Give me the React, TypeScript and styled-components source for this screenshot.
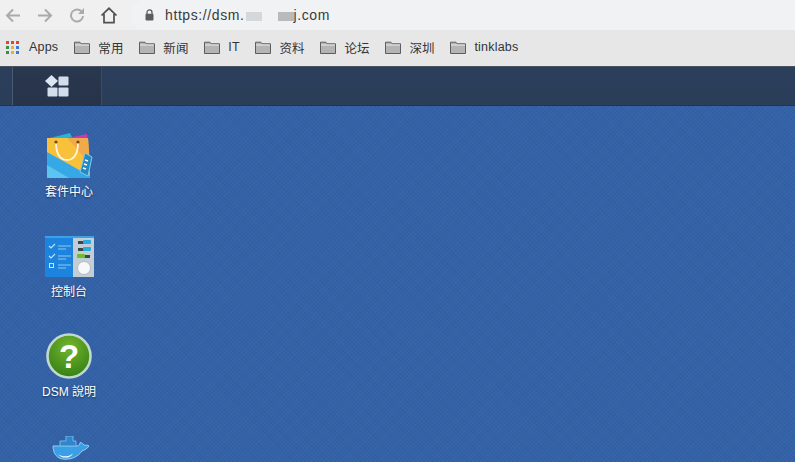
import React from 'react';
import styled, { createGlobalStyle } from 'styled-components';

const GlobalStyle = createGlobalStyle`
  html, body {
    margin: 0;
    padding: 0;
    height: 100%;
    overflow: hidden;
    background: #3462a6;
    font-family: "Liberation Sans", "Noto Sans CJK SC", sans-serif;
  }
`;

const Page = styled.div`
  width: 795px;
  height: 462px;
  display: flex;
  flex-direction: column;
  overflow: hidden;
`;

const AddressRow = styled.div`
  height: 30px;
  flex: none;
  background: #f0f0f1;
  display: flex;
  align-items: center;
  gap: 6px;
`;

const NavButton = styled.div`
  width: 26px;
  height: 30px;
  display: flex;
  align-items: center;
  justify-content: center;
  flex: none;
`;

const UrlBar = styled.div`
  flex: 1;
  height: 30px;
  margin-left: 3px;
  background: #f1f2f4;
  border-radius: 15px 0 0 15px;
  display: flex;
  align-items: center;
  padding-left: 14px;
  font-size: 14px;
  letter-spacing: 0.6px;
  color: #3a3b3d;
`;

const UrlText = styled.span`
  margin-left: 11px;
  white-space: nowrap;
`;

const Redaction = styled.span<{ $w: number; $gap: number; $shade: string }>`
  display: inline-block;
  width: ${p => p.$w}px;
  height: 9px;
  margin-left: ${p => p.$gap}px;
  background: ${p => p.$shade};
  vertical-align: -1px;
`;

const BookmarkRow = styled.div`
  height: 36px;
  flex: none;
  background: #e7e7e7;
  display: flex;
  align-items: center;
  padding: 0 0 2px 6px;
  box-sizing: border-box;
  font-size: 12.5px;
  letter-spacing: 0.2px;
  color: #333436;
`;

const AppsItem = styled.div`
  display: flex;
  align-items: center;
  gap: 10px;
  margin-right: 16px;
`;

const Bookmark = styled.div`
  display: flex;
  align-items: center;
  gap: 8px;
  margin-right: 15.6px;
  white-space: nowrap;
`;

const Taskbar = styled.div`
  height: 40px;
  flex: none;
  box-sizing: border-box;
  background: linear-gradient(#2b3f5c, #2a3e5a);
  border-top: 1px solid #4a5260;
  border-bottom: 1px solid #24344c;
  display: flex;
  padding-left: 12px;
`;

const MainMenu = styled.div`
  width: 90px;
  box-sizing: border-box;
  background: linear-gradient(#2a384f, #263349);
  border-left: 1px solid #4a5a72;
  border-right: 1px solid #3c4c64;
  display: flex;
  align-items: center;
  justify-content: center;
`;

const Desktop = styled.div`
  flex: 1;
  min-height: 0;
  overflow: hidden;
  background-color: #3462a6;
  background-image:
    repeating-linear-gradient(45deg, rgba(20, 50, 110, 0.07) 0 1px, transparent 1px 3px),
    repeating-linear-gradient(-45deg, rgba(120, 160, 220, 0.05) 0 1px, transparent 1px 3px);
  display: flex;
  flex-direction: column;
  align-items: flex-start;
  padding: 24px 0 0 29px;
`;

const DesktopItem = styled.div`
  width: 80px;
  height: 100px;
  flex: none;
  display: flex;
  flex-direction: column;
  align-items: center;
`;

const IconSlot = styled.div`
  height: 52px;
  flex: none;
  display: flex;
  align-items: center;
  justify-content: center;
`;

const ItemLabel = styled.div`
  margin-top: 2px;
  font-size: 12px;
  line-height: 16px;
  color: #ffffff;
  white-space: nowrap;
  text-shadow: 0 1px 2px rgba(0, 0, 0, 0.55);
`;

const BackIcon = ({ flip }: { flip?: boolean }) => (
  <svg width="16" height="15" viewBox="0 0 16 15" style={flip ? { transform: 'scaleX(-1)' } : undefined}>
    <path d="M8 1.5 2 7.5l6 6M2.5 7.5H15" fill="none" stroke="#a9aaac" strokeWidth="2" />
  </svg>
);

const ReloadIcon = () => (
  <svg width="16" height="16" viewBox="0 0 16 16">
    <path d="M13 5.2A6 6 0 1 0 14 9" fill="none" stroke="#a9aaac" strokeWidth="1.9" />
    <path d="M15 1v6H9z" fill="#a9aaac" />
  </svg>
);

const HomeIcon = () => (
  <svg width="18" height="17" viewBox="0 0 18 17">
    <path d="M1.5 8.5 9 1.3l7.5 7.2M4 7v8.7h10V7" fill="none" stroke="#4f5052" strokeWidth="1.7" />
  </svg>
);

const LockIcon = () => (
  <svg width="9" height="12" viewBox="0 0 9 12" style={{ flex: 'none' }}>
    <path d="M2 5V3.4a2.5 2.5 0 0 1 5 0V5" fill="none" stroke="#5c5d5f" strokeWidth="1.3" />
    <rect x="0.5" y="4.8" width="8" height="6.6" rx="1" fill="#5c5d5f" />
  </svg>
);

const appDots = ['#d9463a', '#d9463a', '#d9463a', '#3b8f4a', '#e8b32c', '#3f78d8', '#3b8f4a', '#e8b32c', '#3f78d8'];

const AppsIcon = () => (
  <svg width="13" height="13" viewBox="0 0 13 13">
    {appDots.map((fill, i) => (
      <rect key={i} x={(i % 3) * 5} y={Math.floor(i / 3) * 5} width="3" height="3" fill={fill} />
    ))}
  </svg>
);

const FolderIcon = () => (
  <svg width="16" height="13" viewBox="0 0 16 13">
    <path d="M.5 12.5V1.2h5.4l1.3 1.6h8.3v9.7z" fill="#b4b4b4" stroke="#5d5d5d" />
    <path d="M1 4h14" stroke="#ececec" strokeWidth="1" />
  </svg>
);

const MenuIcon = () => (
  <svg width="24" height="22" viewBox="0 0 24 22">
    <path d="M6.5 0 13 6 6.5 12 0 6z" fill="#dde5ef" />
    <rect x="13.5" y="1.5" width="10" height="9" rx="1" fill="#d3deec" />
    <rect x="2.5" y="12.5" width="10" height="9" rx="1" fill="#d3deec" />
    <rect x="13.5" y="12.5" width="10" height="9" rx="1" fill="#d3deec" />
  </svg>
);

const PackageIcon = () => (
  <svg width="48" height="48" viewBox="0 0 48 48">
    <path d="M5 6 25 1l4 8H5z" fill="#2bb3d6" />
    <path d="M13 8 42 2l1 10H13z" fill="#c63bb0" />
    <path d="M2 6h41l2 40H2z" fill="#f9c13a" />
    <path d="M22 6h21l2 26z" fill="#f2a94a" />
    <path d="M2 20l43 24v2H2z" fill="#37a8e6" />
    <path d="M2 33l22 13H2z" fill="#5cc4f0" />
    <path d="M11 11c0 12 5 17 11 17s11-5 11-17" fill="none" stroke="#fff6d8" strokeWidth="1.8" />
    <circle cx="11" cy="10" r="1.6" fill="#6b4a12" />
    <circle cx="33" cy="10" r="1.6" fill="#6b4a12" />
    <path d="M40 21l7 4-4 19-8-4z" fill="#2389c6" stroke="#7fcbee" />
    <path d="M40 28l3 1M39 32l3 1M38 36l3 1" stroke="#ffffff" strokeWidth="1.4" />
  </svg>
);

const ControlIcon = () => (
  <svg width="49" height="41" viewBox="0 0 49 41">
    <rect x="0" y="0" width="28" height="41" fill="#1c84de" />
    <rect x="28" y="0" width="21" height="41" fill="#c3cdd4" />
    <rect x="0" y="0" width="49" height="2" fill="#3fa0ea" />
    <path d="M4 10l2 2 4-4M4 20l2 2 4-4" fill="none" stroke="#bfe4fb" strokeWidth="1.1" />
    <rect x="4.5" y="27.5" width="4" height="4" fill="none" stroke="#bfe4fb" />
    <path d="M13 10h13M13 13h8M13 20h13M13 23h8M13 29h13M13 32h8" stroke="#8cc8f2" />
    <rect x="33" y="5" width="12" height="3" fill="#3a4650" />
    <rect x="38" y="4" width="8" height="4" rx="1" fill="#2aa8e0" />
    <rect x="33" y="12" width="12" height="3" fill="#3a4650" />
    <rect x="38" y="11" width="8" height="4" rx="1" fill="#2aa8e0" />
    <rect x="33" y="19" width="12" height="3" fill="#3a4650" />
    <rect x="32" y="18" width="8" height="4" rx="1" fill="#6cc02c" />
    <circle cx="39" cy="32" r="6.5" fill="#f6f8f9" stroke="#b4bec5" />
  </svg>
);

const HelpIcon = () => (
  <svg width="46" height="46" viewBox="0 0 46 46">
    <defs>
      <radialGradient id="helpFill" cx="50%" cy="30%" r="75%">
        <stop offset="0%" stopColor="#74b52c" />
        <stop offset="100%" stopColor="#2f7d14" />
      </radialGradient>
    </defs>
    <circle cx="23" cy="23" r="21.5" fill="url(#helpFill)" stroke="#c3d8cc" strokeWidth="2.6" />
    <text x="23" y="35" textAnchor="middle" fontSize="33" fontWeight="700" fontFamily="Liberation Sans, sans-serif" fill="#ffffff">?</text>
  </svg>
);

const DockerIcon = () => (
  <svg width="38" height="40" viewBox="0 0 38 40" style={{ transform: 'translateX(2px)' }}>
    <g transform="scale(1 0.83)">
      <path d="M1 12h24c2 0 3-2 3-4 2 0 3 1 4 3 2 0 4 0 5 1-2 4-5 5-7 6-4 7-10 10-17 10C5 28 1 21 1 12z" fill="#3a9fe4" stroke="#9ed2f2" />
      <path d="M8 6h6V0h7v6h3v6H8z" fill="#2f86cc" stroke="#79bce8" />
      <path d="M6 22c5 4 11 3 15-1-2 6-11 7-15 1z" fill="#ffffff" />
    </g>
  </svg>
);

const bookmarks = ['常用', '新闻', 'IT', '资料', '论坛', '深圳', 'tinklabs'];

const App: React.FC = () => {
  return (
    <Page>
      <GlobalStyle />
      <AddressRow>
        <NavButton><BackIcon /></NavButton>
        <NavButton><BackIcon flip /></NavButton>
        <NavButton><ReloadIcon /></NavButton>
        <NavButton><HomeIcon /></NavButton>
        <UrlBar>
          <LockIcon />
          <UrlText>
            https://dsm.
            <Redaction $w={16} $gap={1} $shade="#d6d7d9" />
            <Redaction $w={16} $gap={16} $shade="#b9babc" />
            j.com
          </UrlText>
        </UrlBar>
      </AddressRow>
      <BookmarkRow>
        <AppsItem><AppsIcon />Apps</AppsItem>
        {bookmarks.map(name => (
          <Bookmark key={name}><FolderIcon />{name}</Bookmark>
        ))}
      </BookmarkRow>
      <Taskbar>
        <MainMenu><MenuIcon /></MainMenu>
      </Taskbar>
      <Desktop>
        <DesktopItem>
          <IconSlot><PackageIcon /></IconSlot>
          <ItemLabel>套件中心</ItemLabel>
        </DesktopItem>
        <DesktopItem>
          <IconSlot><ControlIcon /></IconSlot>
          <ItemLabel>控制台</ItemLabel>
        </DesktopItem>
        <DesktopItem>
          <IconSlot><HelpIcon /></IconSlot>
          <ItemLabel>DSM 說明</ItemLabel>
        </DesktopItem>
        <DesktopItem>
          <IconSlot><DockerIcon /></IconSlot>
        </DesktopItem>
      </Desktop>
    </Page>
  );
};

export default App;
